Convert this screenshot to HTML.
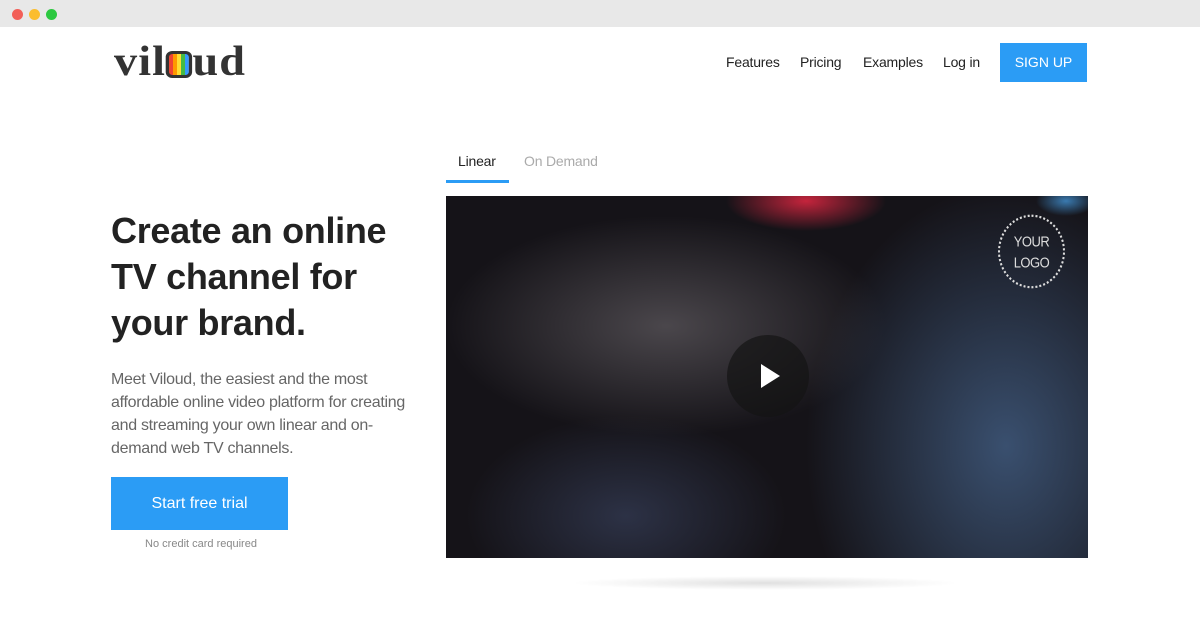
<!DOCTYPE html>
<html><head><style>
*{margin:0;padding:0;box-sizing:border-box}
body{width:1200px;height:627px;background:#fff;font-family:"Liberation Sans",sans-serif;position:relative;overflow:hidden}
.bar{position:absolute;top:0;left:0;width:1200px;height:27px;background:#e8e8e8}
.dot{position:absolute;top:9px;width:11px;height:11px;border-radius:50%}
.logo{position:absolute;left:114px;top:40px;font-family:"Liberation Serif",serif;font-weight:bold;font-size:42px;color:#333;letter-spacing:1px;line-height:44px;transform:scaleX(1.1);transform-origin:left}
.nav{position:absolute;top:54px;font-size:14px;color:#222;letter-spacing:-0.2px}
.signup{position:absolute;left:1000px;top:43px;width:87px;height:39px;background:#2b9cf5;color:#fff;font-size:14px;text-align:center;line-height:39px}
h1{position:absolute;left:111px;top:208px;font-size:36px;line-height:46px;color:#222;font-weight:bold;width:320px;letter-spacing:-0.3px}
.p{position:absolute;left:111px;top:368px;width:310px;font-size:16px;line-height:23px;color:#666;letter-spacing:-0.3px}
.btn{position:absolute;left:111px;top:477px;width:177px;height:53px;background:#2b9cf5;color:#fff;font-size:16px;text-align:center;line-height:53px}
.nc{position:absolute;left:111px;top:538px;width:180px;text-align:center;font-size:11px;color:#888}
.tab{position:absolute;top:153px;font-size:14px;letter-spacing:-0.2px}
.video{position:absolute;left:446px;top:196px;width:642px;height:362px;overflow:hidden;
background:radial-gradient(ellipse 80px 30px at 360px 5px,#c4243c,transparent),
radial-gradient(ellipse 30px 15px at 620px 5px,#3a7ab0,transparent),
radial-gradient(ellipse 200px 260px at 560px 250px,rgba(70,100,140,.75),transparent),
radial-gradient(ellipse 220px 110px at 220px 130px,rgba(110,105,110,.6),transparent),
radial-gradient(ellipse 160px 100px at 180px 320px,rgba(60,70,100,.6),transparent),
#151318}
</style></head><body>
<div class="bar"></div>
<div class="dot" style="left:12px;background:#f25f58"></div>
<div class="dot" style="left:29px;background:#fbbd2e"></div>
<div class="dot" style="left:46px;background:#2cc840"></div>
<div class="logo">vil<span style="display:inline-block;width:24px;height:27px;border:3px solid #333;border-radius:6px;vertical-align:-3px;background:linear-gradient(90deg,#e43 0 20%,#f90 20% 40%,#fd3 40% 60%,#4b4 60% 80%,#39f 80%)"></span>ud</div>
<div class="nav" style="left:726px">Features</div>
<div class="nav" style="left:800px">Pricing</div>
<div class="nav" style="left:863px">Examples</div>
<div class="nav" style="left:943px">Log in</div>
<div class="signup">SIGN UP</div>
<h1>Create an online TV channel for your brand.</h1>
<div class="p">Meet Viloud, the easiest and the most affordable online video platform for creating and streaming your own linear and on-demand web TV channels.</div>
<div class="btn">Start free trial</div>
<div class="nc">No credit card required</div>
<div class="tab" style="left:458px;color:#222">Linear</div>
<div style="position:absolute;left:446px;top:180px;width:63px;height:3px;background:#2b9cf5"></div>
<div class="tab" style="left:524px;color:#aaa">On Demand</div>
<div class="video">
<div style="position:absolute;left:552px;top:22px;width:67px;height:67px;border:2px dotted #ddd;border-radius:50%;color:#ddd;font-size:13px;text-align:center;line-height:19px;padding-top:13px;letter-spacing:-0.5px;transform:scaleY(1.1)">YOUR<br>LOGO</div>
<div style="position:absolute;left:281px;top:139px;width:82px;height:82px;border-radius:50%;background:rgba(20,20,20,.7)"></div>
<div style="position:absolute;left:315px;top:168px;width:0;height:0;border-left:19px solid #fff;border-top:12px solid transparent;border-bottom:12px solid transparent"></div>
</div>
<div style="position:absolute;left:570px;top:576px;width:390px;height:14px;border-radius:50%;background:radial-gradient(ellipse,rgba(0,0,0,.12),transparent 70%)"></div>
</body></html>
